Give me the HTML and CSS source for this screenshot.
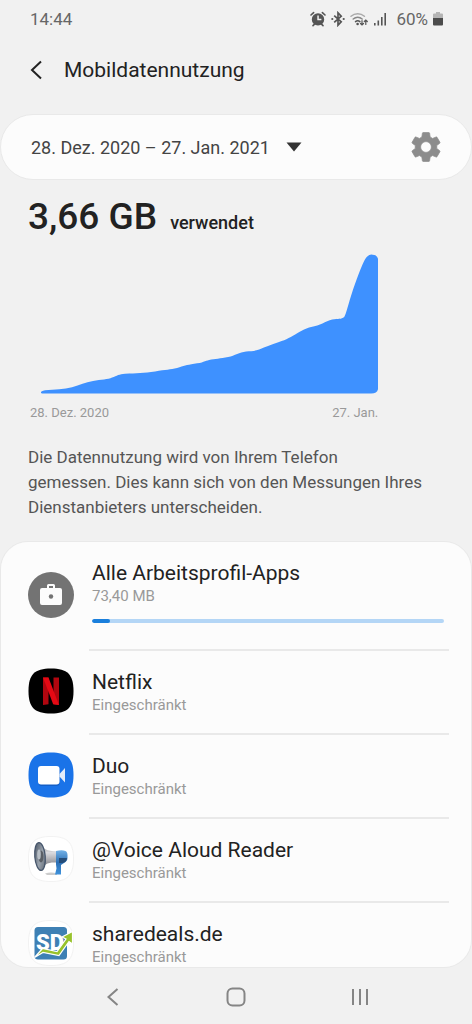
FILE: index.html
```html
<!DOCTYPE html>
<html lang="de">
<head>
<meta charset="utf-8">
<meta name="viewport" content="width=device-width, initial-scale=1">
<title>Mobildatennutzung</title>
<link rel="stylesheet" href="styles.css">
</head>
<body>
<div class="status">
  <span>14:44</span>
  <div class="status-icons">
    <svg width="16" height="16" viewBox="0 0 16 16" fill="none" stroke="#555" stroke-width="1.6" stroke-linecap="round" aria-hidden="true">
      <path fill="#555" fill-rule="evenodd" stroke="none" d="M8 2.200a6.200 6.200 0 1 1 0 12.400A6.200 6.200 0 0 1 8 2.200zM7.300 4.600v4.600h4.100V7.800H8.800V4.600z"/>
      <path d="M1 4 3.600 1.600M15 4l-2.600-2.400M3 14.600l1.500-1.500M13 14.600l-1.500-1.500"/>
    </svg>
    <svg width="14" height="16" viewBox="0 0 14 16" fill="none" stroke="#555" stroke-width="1.7" aria-hidden="true">
      <path d="m3.200 4.600 7 6.300L7 14.200V1.800l3.200 3.300-7 6.300"/>
      <circle cx="1.300" cy="8" r="1.100" fill="#555" stroke="none"/><circle cx="12.700" cy="8" r="1.100" fill="#555" stroke="none"/>
    </svg>
    <svg width="18" height="16" viewBox="0 0 18 16" fill="none" stroke-linecap="round" aria-hidden="true">
      <path stroke="#aaa" stroke-width="1.500" d="M1 5.300a10.300 10.300 0 0 1 13.400 0"/>
      <path stroke="#888" stroke-width="1.500" d="M3.200 8a7 7 0 0 1 9 0"/>
      <path stroke="#555" stroke-width="1.500" d="M5.500 10.600a3.600 3.600 0 0 1 4.400 0"/>
      <circle cx="7.600" cy="13" r="1.300" fill="#555"/>
      <path stroke="#555" stroke-width="1.200" d="M12 9.500v4.500m-1.500-1.500L12 14l1.500-1.500M15.800 13.500V9m-1.500 1.500L15.800 9l1.500 1.500"/>
    </svg>
    <svg width="14" height="16" viewBox="0 0 14 16" fill="#555" aria-hidden="true">
      <path d="M1 12h1.600v2.500H1zM4.500 9.500h1.600v5H4.500zM8 6h1.600v8.500H8zM11.400 2H13v12.500h-1.600z"/>
    </svg>
    <span class="battery-level">60%</span>
    <svg width="10" height="16" viewBox="0 0 10 16" aria-hidden="true">
      <path fill="#b5b5b5" d="M3 1h4v1.500h2a1 1 0 0 1 1 1V8H0V3.500a1 1 0 0 1 1-1h2z"/>
      <path fill="#4c4c4c" d="M0 7h10v6.500a1 1 0 0 1-1 1H1a1 1 0 0 1-1-1z"/>
    </svg>
  </div>
</div>

<header class="header">
  <button class="back" type="button" aria-label="Zurück">
    <svg width="16" height="20" viewBox="0 0 16 20" fill="none" stroke="#222" stroke-width="2" aria-hidden="true"><path d="m13 1.500-9 8.500 9 8.500"/></svg>
  </button>
  <h1>Mobildatennutzung</h1>
</header>

<section class="period">
  <div class="period-picker">
    <select aria-label="Zeitraum">
      <option>28. Dez. 2020 – 27. Jan. 2021</option>
    </select>
    <svg width="16" height="10" viewBox="0 0 16 10" aria-hidden="true"><path fill="#333" d="M.5.500h15L8 9.500z"/></svg>
  </div>
  <button class="settings" type="button" aria-label="Einstellungen">
    <svg width="30" height="30" viewBox="2 2 20 20" aria-hidden="true">
      <path fill="#8c8c8c" stroke="#8c8c8c" stroke-width=".5" d="M19.140 12.940c.04-.3.060-.61.060-.94 0-.32-.02-.64-.07-.94l2.030-1.580c.18-.14.230-.41.120-.61l-1.920-3.320c-.12-.22-.37-.29-.59-.22l-2.390.96c-.5-.38-1.030-.7-1.620-.94l-.36-2.540c-.04-.24-.24-.41-.48-.41h-3.840c-.24 0-.43.170-.47.410l-.36 2.540c-.59.240-1.130.570-1.620.940l-2.390-.96c-.22-.08-.47 0-.59.220L2.740 8.870c-.12.210-.08.470.120.610l2.030 1.580c-.05.300-.09.630-.09.940s.020.640.070.940l-2.030 1.580c-.18.140-.23.410-.12.610l1.920 3.320c.120.220.370.290.590.220l2.390-.96c.5.380 1.030.7 1.620.94l.36 2.540c.05.240.24.410.48.410h3.840c.24 0 .44-.17.470-.41l.36-2.540c.59-.24 1.130-.56 1.620-.94l2.390.96c.22.080.47 0 .59-.22l1.920-3.320c.12-.22.070-.47-.12-.61zM12 15.600A3.600 3.600 0 1 1 12 8.400a3.600 3.600 0 0 1 0 7.200z"/>
    </svg>
  </button>
</section>

<section class="usage">
  <p class="total"><strong>3,66 GB</strong> <span>verwendet</span></p>
  <figure class="chart">
    <svg viewBox="0 0 350 140" role="img" aria-label="Datenverbrauch vom 28. Dez. 2020 bis 27. Jan.">
      <path fill="#3e91ff" d="M15 139.500C12 139.500 12 137 17 136.200 27 135.500 36 135 44 133.200 52 131 57 128.500 65 127 73 125.500 80 125.500 84 123.500 89 121.500 91 120 97 119.600 108 119 116 119 127 117.300 138 115.800 142 115.500 149 114 156 112 158 111 166 109.800 175 108.700 177 107 181 106 187 104.700 192 104.700 200 103 207 101.500 211 98.500 218 97.500 223 97 226 97.200 231 95.500 238 92.500 242 91 248 89 256 86.500 261 84 267 80.500 274 76.500 277 74.500 283 73 292 71.500 297 67.500 304 65.500 310 64.500 313 65.500 316 63 318 60 320 50 325 35Q333 12 337 5 340 .5 343 .5 350 .5 350 7V133Q350 139.500 343 139.500z"/>
    </svg>
    <figcaption><span>28. Dez. 2020</span><span>27. Jan.</span></figcaption>
  </figure>
  <p class="note">Die Datennutzung wird von Ihrem Telefon<br>gemessen. Dies kann sich von den Messungen Ihres Dienstanbieters unterscheiden.</p>
</section>

<ul class="apps">
  <li class="app app-work">
    <svg class="icon" viewBox="0 0 46 46" aria-hidden="true">
      <circle cx="23" cy="23" r="23" fill="#737373"/>
      <path fill="#fcfcfc" fill-rule="evenodd" d="M19 16v-2.500Q19 12 20.500 12h5Q27 12 27 13.500V16h5q2 0 2 2v13q0 2-2 2H14q-2 0-2-2V18q0-2 2-2zm2 0h4v-2h-4z"/>
      <circle cx="23" cy="24.500" r="2.200" fill="#737373"/>
    </svg>
    <div class="app-body">
      <h2>Alle Arbeitsprofil-Apps</h2>
      <p>73,40 MB</p>
      <progress value="5" max="100" aria-label="Anteil Arbeitsprofil-Apps"></progress>
    </div>
  </li>
  <li class="app">
    <svg class="icon" viewBox="0 0 46 46" aria-hidden="true">
      <path fill="#000" d="M23 .5C39.500.5 45.500 6.500 45.500 23S39.500 45.500 23 45.500.5 39.500.5 23 6.500.5 23 .5z"/>
      <path fill="#b1060f" d="M15 9.500h5.500v26.800l-5.500.7zM25.500 9.500H31V37l-5.500-.7z"/>
      <path fill="#e50914" d="M15 9.500h5.500L31 37l-5.800-.7z"/>
    </svg>
    <div class="app-body"><h2>Netflix</h2><p>Eingeschränkt</p></div>
  </li>
  <li class="app">
    <svg class="icon" viewBox="0 0 46 46" aria-hidden="true">
      <path fill="#1a73e8" d="M23 .5C39.500.5 45.500 6.500 45.500 23S39.500 45.500 23 45.500.5 39.500.5 23 6.500.5 23 .5z"/>
      <rect x="10.500" y="15.500" width="21" height="18.500" rx="3" fill="#0d4ba6" opacity=".5"/>
      <rect x="10" y="14" width="21.500" height="18.500" rx="3" fill="#fff"/>
      <path fill="#e3ecfa" d="m31.500 22 5.500-6v14.500l-5.500-6z"/>
    </svg>
    <div class="app-body"><h2>Duo</h2><p>Eingeschränkt</p></div>
  </li>
  <li class="app">
    <svg class="icon" viewBox="0 0 46 46" aria-hidden="true">
      <defs>
        <linearGradient id="horn" x1="0" y1="0" x2="0" y2="1"><stop offset="0" stop-color="#777"/><stop offset=".35" stop-color="#dcdce0"/><stop offset="1" stop-color="#66666c"/></linearGradient>
        <linearGradient id="bell" x1="0" y1="0" x2="1" y2="1"><stop offset="0" stop-color="#454f5e"/><stop offset=".55" stop-color="#9aa3ad"/><stop offset="1" stop-color="#5a626e"/></linearGradient>
        <linearGradient id="grip" x1="0" y1="0" x2="0" y2="1"><stop offset="0" stop-color="#73b2e8"/><stop offset=".5" stop-color="#2c6fb4"/><stop offset="1" stop-color="#3f92dc"/></linearGradient>
      </defs>
      <path fill="#fff" stroke="#f2f2f2" d="M23 .5C39.500.5 45.500 6.500 45.500 23S39.500 45.500 23 45.500.5 39.500.5 23 6.500.5 23 .5z"/>
      <path fill="#ccc" d="M17 37.500q6-2 12 0v1.500H19z"/>
      <path fill="url(#horn)" d="M12 7c3 6 6 8 17 8.500v11c-10-.5-13 2-16 8z"/>
      <ellipse cx="12" cy="20.500" rx="5.200" ry="14" transform="rotate(-5 12 20.500)" fill="url(#bell)" stroke="#46566c" stroke-width="1.300"/>
      <ellipse cx="13" cy="20.500" rx="2.500" ry="6" fill="#5a5f66"/>
      <ellipse cx="11" cy="18.500" rx="1.800" ry="5" fill="#b8bfc6"/>
      <path fill="url(#grip)" d="M28 15q6-1.500 9.500 0Q40 16 39.500 22q0 3-3.500 5l-3 2L33 38.500h-6l1.500-6-.5-4z"/>
      <path fill="#254c78" d="M31 22h8q0 4-4.500 5L31 27z"/>
    </svg>
    <div class="app-body"><h2>@Voice Aloud Reader</h2><p>Eingeschränkt</p></div>
  </li>
  <li class="app">
    <svg class="icon" viewBox="0 0 46 46" aria-hidden="true">
      <path fill="#fff" stroke="#f2f2f2" d="M23 .5C39.500.5 45.500 6.500 45.500 23S39.500 45.500 23 45.500.5 39.500.5 23 6.500.5 23 .5z"/>
      <rect x="6.500" y="7" width="32.500" height="32.500" rx="3.500" fill="#3e80b4"/>
      <text class="sd" x="8" y="29.500">SD</text>
      <path fill="#98c22c" stroke="#fff" stroke-width="1.200" d="M6.500 37.500 14.500 28.500 29 31.500 38 19l-4-2L44.500 11.500V24l-3.500-2.500L31 35.500 15 32.500z"/>
    </svg>
    <div class="app-body"><h2>sharedeals.de</h2><p>Eingeschränkt</p></div>
  </li>
</ul>

<nav class="navbar" aria-label="Systemnavigation">
  <button type="button" aria-label="Zurück"><svg width="20" height="20" viewBox="0 0 20 20" fill="none" stroke="#858585" stroke-width="2" aria-hidden="true"><path d="m15.500 2-9 8 9 8"/></svg></button>
  <button type="button" aria-label="Startseite"><svg width="20" height="20" viewBox="0 0 20 20" fill="none" stroke="#858585" stroke-width="2" aria-hidden="true"><rect x="1.500" y="1.500" width="17" height="17" rx="5"/></svg></button>
  <button type="button" aria-label="Letzte Apps"><svg width="20" height="20" viewBox="0 0 20 20" fill="none" stroke="#858585" stroke-width="2" aria-hidden="true"><path d="M3 2v16M10 2v16M17 2v16"/></svg></button>
</nav>
</body>
</html>
```
FILE: styles.css
```css
* {
  box-sizing: border-box;
}

body {
  margin: 0;
  height: 100vh;
  display: flex;
  flex-direction: column;
  background: #f1f1f1;
  color: #222;
  font-family: Roboto, "Liberation Sans", sans-serif;
}

h1, h2, p, ul, figure {
  margin: 0;
  padding: 0;
}

button, select {
  margin: 0;
  padding: 0;
  border: 0;
  background: none;
  color: inherit;
  font: inherit;
}

svg {
  display: block;
  flex: none;
}

.status {
  display: flex;
  flex: none;
  justify-content: space-between;
  align-items: center;
  height: 38px;
  padding: 0 29px 0 30px;
  color: #666;
  font-size: 17px;
}

.status-icons {
  display: flex;
  align-items: center;
  gap: 5px;
}

.battery-level {
  padding-left: 4px;
}

.header {
  display: flex;
  flex: none;
  align-items: center;
  gap: 20px;
  height: 64px;
  padding: 0 28px;
}

h1 {
  font-size: 21px;
  font-weight: 400;
}

.period {
  display: flex;
  flex: none;
  justify-content: space-between;
  align-items: center;
  height: 66px;
  margin-top: 12px;
  padding: 0 30px;
  border: 1px solid #e9e9e9;
  border-radius: 33px;
  background: #fcfcfc;
}

.period-picker {
  display: grid;
  align-items: center;
}

.period-picker > * {
  grid-area: 1 / 1;
}

.period-picker select {
  appearance: none;
  padding-right: 32px;
  color: #444;
  font-size: 18px;
}

.period-picker svg {
  justify-self: end;
  pointer-events: none;
}

.usage {
  flex: none;
  padding: 13px 28px 21px;
}

.total {
  display: flex;
  align-items: baseline;
  gap: 13px;
  line-height: 48px;
  font-size: 18px;
  font-weight: 500;
}

.total strong {
  font-size: 37px;
  font-weight: 500;
}

.chart {
  width: 84.2%;
  padding-top: 7px;
}

.chart figcaption {
  display: flex;
  justify-content: space-between;
  padding: 9px 0 0 2px;
  color: #999;
  font-size: 13px;
  line-height: 20px;
}

.note {
  padding-top: 22px;
  color: #555;
  font-size: 17px;
  line-height: 25px;
}

.apps {
  flex: 1;
  min-height: 0;
  overflow-y: auto;
  scrollbar-width: none;
  border: 1px solid #e9e9e9;
  border-radius: 28px;
  background: #fcfcfc;
  list-style: none;
}

.app {
  display: flex;
  align-items: center;
  gap: 15px;
  padding: 0 22px 0 27px;
}

.icon {
  width: 46px;
  height: 46px;
  margin-bottom: 4px;
}

.app-body {
  flex: 1;
  height: 84px;
  padding: 18px 5px 0 3px;
  border-bottom: 2px solid #e9e9e9;
}

.app:last-child .app-body {
  border-bottom: 0;
}

.app-work .app-body {
  height: 109px;
}

h2 {
  font-size: 21px;
  font-weight: 400;
  line-height: 26px;
}

.app p {
  color: #999;
  font-size: 15px;
  line-height: 21px;
}

progress {
  display: block;
  appearance: none;
  width: 100%;
  height: 4px;
  margin-top: 12px;
  border: 0;
  border-radius: 2px;
  overflow: hidden;
}

progress::-webkit-progress-bar {
  background: #b4d6f6;
}

progress::-webkit-progress-value {
  background: #1a7fdc;
  border-radius: 2px;
}

.sd {
  fill: #fff;
  font-size: 22px;
  font-weight: 900;
}

.navbar {
  display: flex;
  flex: none;
  justify-content: center;
  gap: 84px;
  height: 56px;
}

.navbar button {
  display: grid;
  place-items: center;
  width: 40px;
  height: 58px;
}
```
